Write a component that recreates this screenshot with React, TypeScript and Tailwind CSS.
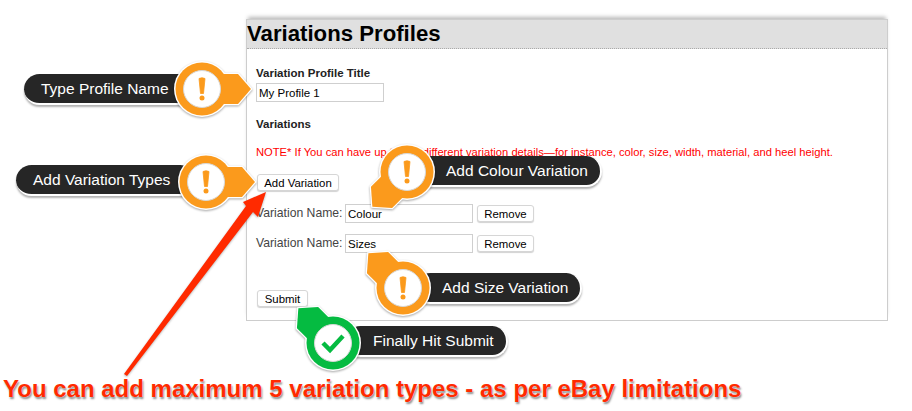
import React from 'react';

const font = "font-['Liberation_Sans',Arial,sans-serif]";

const callouts = [
  { text: 'Type Profile Name', pill: 'left-[24px] top-[74px] w-[170px] pl-[17px]' },
  { text: 'Add Variation Types', pill: 'left-[16px] top-[165px] w-[180px] pl-[17px]' },
  { text: 'Add Colour Variation', pill: 'left-[415px] top-[156px] w-[187px] pl-[31px]' },
  { text: 'Add Size Variation', pill: 'left-[415px] top-[273px] w-[167px] pl-[27px]' },
  { text: 'Finally Hit Submit', pill: 'left-[345px] top-[326px] w-[163px] pl-[28px]' },
];

const pins = [
  { pos: 'left-[142px] top-[29px]', angle: 0, color: '#fb9a1c', check: false },
  { pos: 'left-[146px] top-[122px]', angle: 0, color: '#fb9a1c', check: false },
  { pos: 'left-[347px] top-[112px]', angle: 135, color: '#fb9a1c', check: false },
  { pos: 'left-[343px] top-[228px]', angle: 225, color: '#fb9a1c', check: false },
  { pos: 'left-[273px] top-[283px]', angle: 225, color: '#05bb41', check: true },
];

const Pin = ({ pos, angle, color, check }: (typeof pins)[0]) => (
  <svg
    className={`absolute ${pos} drop-shadow-[0_1px_1px_rgba(0,0,0,0.35)]`}
    width="120"
    height="120"
    viewBox="-60 -60 120 120"
  >
    <g transform={`rotate(${angle})`}>
      <path d="M10 -15H36L49 0L36 15H10Z" fill={color} stroke="#fff" strokeWidth="2.5" strokeLinejoin="miter" />
    </g>
    <circle r="28" fill="#fff" />
    <circle r="26.5" fill={color} />
    <g transform={`rotate(${angle})`}>
      <path d="M10 -15H36L49 0L36 15H10Z" fill={color} />
    </g>
    <circle r="18.5" fill="#fff" stroke="#d8d8d8" strokeWidth="1" />
    {check ? (
      <path d="M-10 0L-3 7L10 -7" fill="none" stroke={color} strokeWidth="4.5" />
    ) : (
      <>
        <path d="M-3 -10.5Q0 -12 3 -10.5L1.5 4.5H-1.5Z" fill={color} stroke={color} strokeWidth="0.8" strokeLinejoin="round" />
        <circle cy="9" r="2.5" fill={color} />
      </>
    )}
  </svg>
);

const Button = ({ label, className }: { label: string; className: string }) => (
  <button className={`h-[17px] rounded-[3px] border border-[#d6d6d6] bg-white text-center text-[11.4px] leading-[14px] text-black shadow-[0_1px_1px_rgba(0,0,0,0.18)] ${className}`}>
    {label}
  </button>
);

const Input = ({ value, className }: { value: string; className: string }) => (
  <div className={`border border-[#cfcfcf] bg-white pl-[2px] text-[11.5px] leading-[18px] text-black ${className}`}>
    {value}
  </div>
);

const VariationRow = ({ value, className }: { value: string; className: string }) => (
  <div className={`flex items-center ${className}`}>
    <span className="w-[89px] text-[12.2px] text-[#444]">Variation Name:</span>
    <Input value={value} className="h-[19px] w-[128px]" />
    <Button label="Remove" className="ml-[4px] w-[57px]" />
  </div>
);

export default function App() {
  return (
    <div className={`relative h-[411px] w-[912px] overflow-hidden bg-white ${font}`}>
      <div className="ml-[246px] mt-[19px] h-[302px] w-[642px] border border-[#cdcdcd] shadow-[0_-4px_4px_-2px_rgba(0,0,0,0.28)]">
        <h1 className="h-[29px] border-b border-dotted border-[#aaa] bg-[#e0e0e0] text-[22.2px] font-bold leading-[27px] text-black">
          Variations Profiles
        </h1>
        <div className="px-[9px]">
          <p className="mt-[18px] text-[11.5px] font-bold leading-[13px] text-[#222]">Variation Profile Title</p>
          <Input value="My Profile 1" className="mt-[3px] h-[19px] w-[128px]" />
          <p className="mt-[16px] text-[11.5px] font-bold leading-[13px] text-[#222]">Variations</p>
          <p className="mt-[15px] whitespace-nowrap text-[11.2px] leading-[13px] text-[#f00]">
            NOTE* If You can have up to five different variation details—for instance, color, size, width, material, and heel height.
          </p>
          <Button label="Add Variation" className="ml-px mt-[15px] block w-[82px]" />
          <VariationRow value="Colour" className="mt-[13px]" />
          <VariationRow value="Sizes" className="mt-[11px]" />
          <Button label="Submit" className="ml-px mt-[37px] block w-[51px]" />
        </div>
      </div>
      <p className="ml-[3px] mt-[54px] whitespace-nowrap text-[24px] font-bold leading-[28px] text-[#ff2a00] [text-shadow:0_0_1px_#fff,1px_2px_2px_rgba(0,0,0,0.45)]">
        You can add maximum 5 variation types - as per eBay limitations
      </p>

      {/* big red arrow */}
      <svg className="absolute left-0 top-0 drop-shadow-[0_1px_1px_rgba(0,0,0,0.3)]" width="912" height="411">
        <path d="M124 374L127 376L253 212L258 217L266 192L243 202L246 206Z" fill="#ff2a00" />
      </svg>

      {callouts.map((c) => (
        <div
          key={c.text}
          className={`absolute h-[31px] rounded-full border-b-2 border-r-2 border-white bg-[#262626] text-[15.5px] font-medium leading-[30px] text-white shadow-[0_2px_2px_rgba(0,0,0,0.3)] ${c.pill}`}
        >
          {c.text}
        </div>
      ))}
      {pins.map((p) => (
        <Pin key={p.pos} {...p} />
      ))}
    </div>
  );
}
